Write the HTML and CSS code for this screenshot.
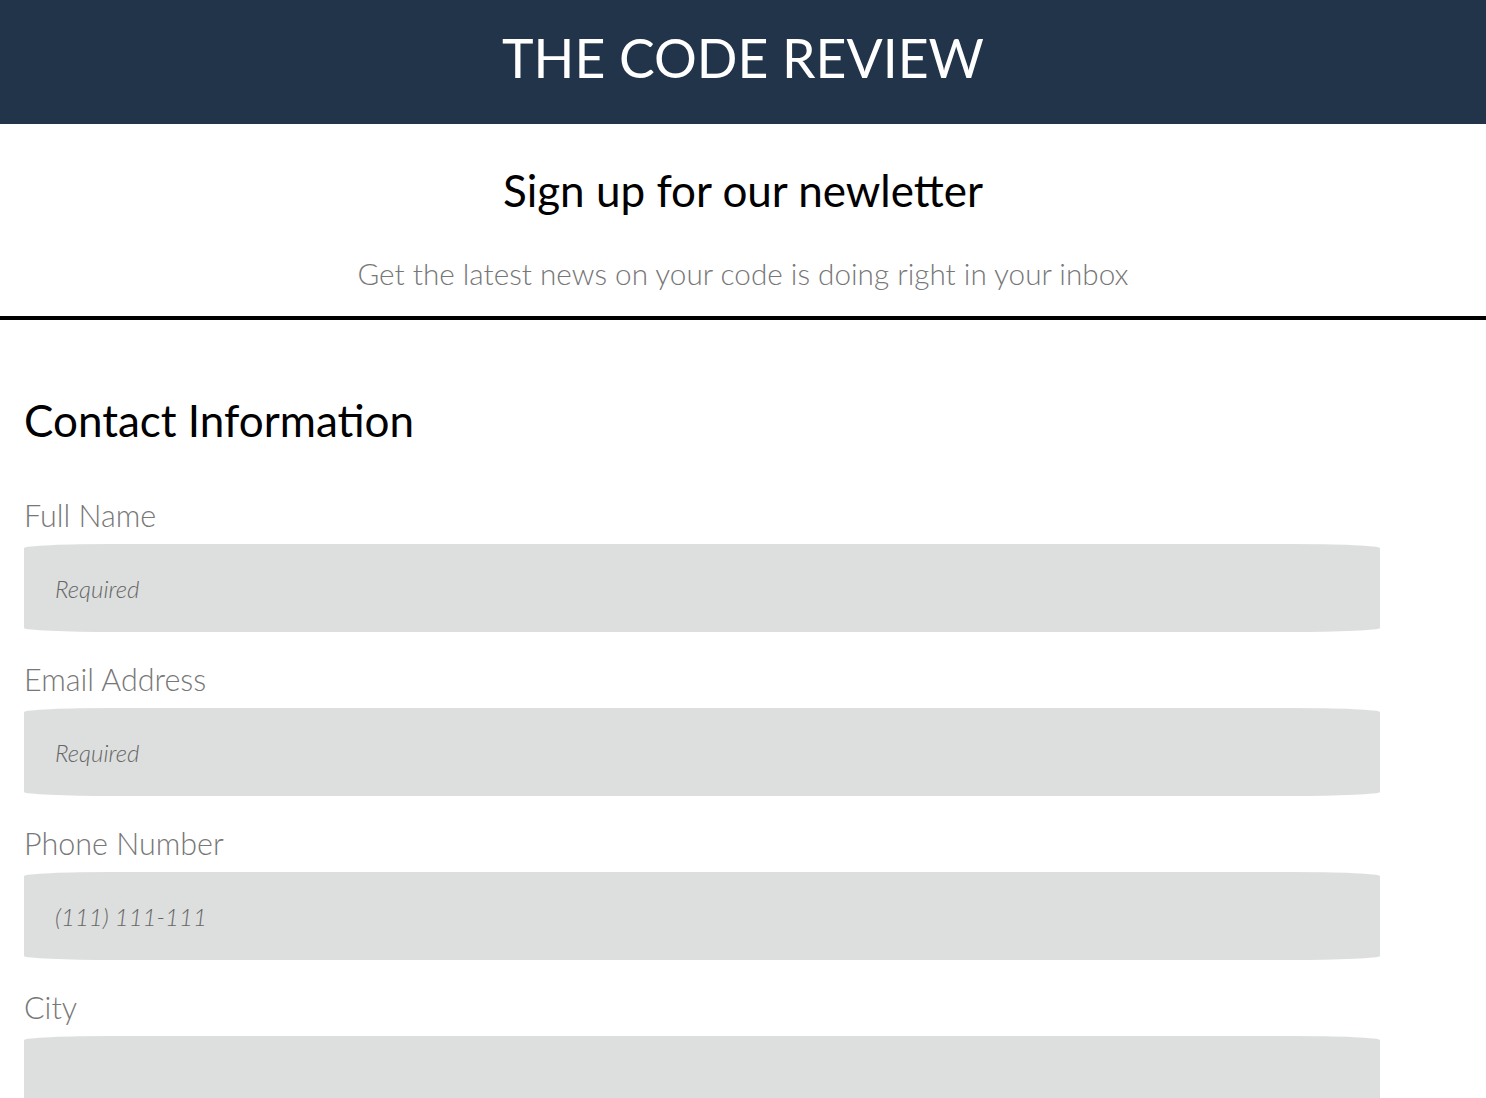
FILE: index.html
```html
<!DOCTYPE html>
<html lang="en">
<head>
<meta charset="utf-8">
<title>The Code Review</title>
<link rel="stylesheet" href="styles.css">
</head>
<body>
<header class="masthead">
  <h1 class="masthead-title">THE CODE REVIEW</h1>
</header>
<section class="intro">
  <h2 class="intro-title">Sign up for our newletter</h2>
  <p class="intro-sub">Get the latest news on your code is doing right in your inbox</p>
</section>
<form class="signup">
  <h2 class="section-title">Contact Information</h2>
  <div class="field">
    <label class="field-label" for="name">Full Name</label>
    <input class="field-input" id="name" type="text" placeholder="Required">
  </div>
  <div class="field">
    <label class="field-label" for="email">Email Address</label>
    <input class="field-input" id="email" type="email" placeholder="Required">
  </div>
  <div class="field">
    <label class="field-label" for="phone">Phone Number</label>
    <input class="field-input" id="phone" type="tel" placeholder="(111) 111-111">
  </div>
  <div class="field">
    <label class="field-label" for="city">City</label>
    <input class="field-input" id="city" type="text">
  </div>
</form>
</body>
</html>
```

FILE: styles.css
```css
* { box-sizing: border-box; }
body {
  margin: 0;
  font-family: Lato, "Open Sans", sans-serif;
  background: #fff;
  color: #000;
}
.masthead {
  background: #22344a;
  height: 124px;
  display: flex;
  align-items: center;
  justify-content: center;
}
.masthead-title {
  margin: 0;
  color: #fff;
  font-weight: 400;
  font-size: 53.5px;
  line-height: 1;
  padding-bottom: 8px;
}
.intro {
  text-align: center;
  border-bottom: 4px solid #000;
  padding: 38px 0 22px;
}
.intro-title {
  margin: 0;
  font-weight: 400;
  font-size: 44px;
  line-height: 56px;
}
.intro-sub {
  margin: 36px 0 0;
  color: #777;
  font-size: 29.7px;
  font-weight: 300;
  line-height: 40px;
}
.signup {
  padding: 72px 24px 0;
}
.section-title {
  margin: 0 0 47px;
  font-weight: 400;
  font-size: 44px;
  line-height: 56px;
}
.field {
  display: flex;
  flex-direction: column;
  margin-bottom: 27px;
}
.field-label {
  color: #777;
  font-size: 30.5px;
  font-weight: 300;
  line-height: 40px;
  margin-bottom: 9px;
}
.field-input {
  width: 1356px;
  height: 88px;
  border: none;
  background: #dddfde;
  border-radius: 90px / 4px;
  padding: 0 31px;
  font-family: inherit;
  font-size: 24px;
  font-weight: 300;
  font-style: italic;
  color: #555;
  outline: none;
}
.field-input::placeholder {
  color: #666;
  font-style: italic;
}
```
